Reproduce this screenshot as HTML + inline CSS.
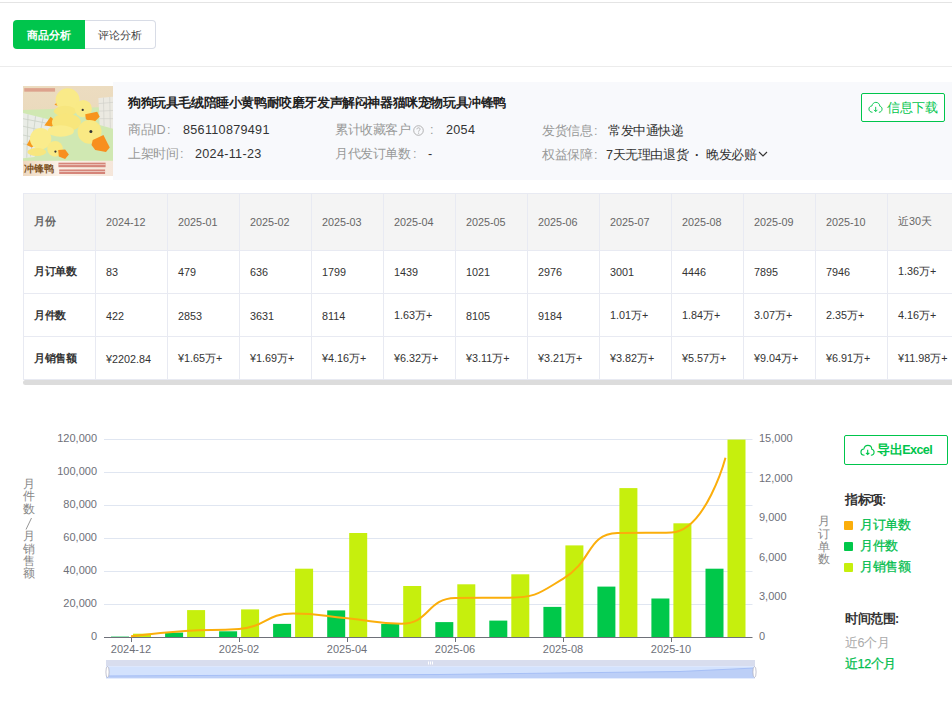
<!DOCTYPE html>
<html><head><meta charset="utf-8">
<style>
*{margin:0;padding:0;box-sizing:border-box}
html,body{width:952px;height:716px;overflow:hidden;background:#fff}
body{position:relative;font-family:"Liberation Sans",sans-serif;color:#333}
.a{position:absolute;white-space:nowrap;line-height:1}
.hl{position:absolute;left:0;width:952px;height:1px}
.tab1{position:absolute;left:13px;top:20px;width:72px;height:29px;background:#00c54c;border-radius:4px 0 0 4px;color:#fff;font-size:10.8px;font-weight:bold;text-align:center;line-height:30px;letter-spacing:-0.2px}
.tab2{position:absolute;left:85px;top:20px;width:71px;height:29px;border:1px solid #d8dce6;border-left:none;border-radius:0 4px 4px 0;color:#444;font-size:10.8px;font-weight:normal;text-align:center;line-height:28px;letter-spacing:-0.2px}
.panel{position:absolute;left:113px;top:82px;width:839px;height:98px;background:#f8f9fc}
.cj{letter-spacing:-0.4px}
.lbl{color:#999;font-size:12.6px}
.val{color:#333;font-size:12.6px}
.btn{position:absolute;border:1px solid #00c54c;background:#fff;border-radius:2px;color:#00c54c}
table{position:absolute;left:23px;top:193px;width:937px;border-collapse:collapse;table-layout:fixed}
td{width:72px;border:1px solid #e8eaf2;font-size:10.8px;color:#333;padding:0 0 0 10px;white-space:nowrap;overflow:hidden}
tr.h td{background:#f4f4f4;height:57px;color:#666}
tr.r td{height:43px}
tr.d td{padding-top:1px}
td.k{font-weight:bold;color:#333;letter-spacing:-0.3px}
.g{fill:#00c84a}
.l{fill:#c6ef0d}
.ax{font-size:11px;fill:#6e7079;font-family:"Liberation Sans",sans-serif}
.vt{position:absolute;font-size:12px;color:#888;line-height:12.3px;width:14px;text-align:center;white-space:normal}
.sq{position:absolute;left:844px;width:9px;height:9px;border-radius:1px}
.lg{position:absolute;left:860px;font-size:12.6px;color:#00bd4c;-webkit-text-stroke:0.25px #00bd4c}
</style></head><body>
<div class="hl" style="top:2px;background:#e4e4e4"></div>
<div class="tab1">商品分析</div>
<div class="tab2">评论分析</div>
<div class="hl" style="top:66px;background:#ececec"></div>

<div class="panel"></div>
<div id="img" style="position:absolute;left:23px;top:86px;width:90px;height:90px;overflow:hidden">
<svg width="90" height="90" viewBox="0 0 716 716">
<defs>
<linearGradient id="bgt" x1="0" y1="0" x2="0" y2="1"><stop offset="0" stop-color="#ecdcc0"/><stop offset="1" stop-color="#e6d5b6"/></linearGradient>
<linearGradient id="bot" x1="0" y1="0" x2="1" y2="0"><stop offset="0" stop-color="#eed8bf"/><stop offset="0.4" stop-color="#fbf2e8"/><stop offset="1" stop-color="#f5e6da"/></linearGradient>
</defs>
<rect width="716" height="716" fill="url(#bgt)"/>
<path d="M0,190 L716,165 L716,600 L0,600Z" fill="#d0e8b2"/>
<path d="M0,215 L200,265 L225,330 L90,565 L0,575Z" fill="#e9ece6"/>
<g stroke="#c9cfc4" stroke-width="6" fill="none"><path d="M0,260 L210,300 M0,320 L180,360 M0,390 L140,420 M0,460 L110,480 M40,225 L30,570 M100,240 L60,560 M160,255 L110,500"/></g>
<path d="M600,95 L716,85 L716,340 L610,310Z" fill="#ebe9e1"/>
<g stroke="#cfcfc8" stroke-width="5" fill="none"><path d="M600,140 L716,130 M605,200 L716,195 M608,260 L716,260 M640,92 L645,320 M690,88 L695,335"/></g>
<rect x="10" y="17" width="245" height="28" fill="#d88f7c" opacity="0.75"/>
<path d="M250,150 L290,112 L305,168Z" fill="#f79a1e"/>
<ellipse cx="355" cy="110" rx="95" ry="92" fill="#f9ea88"/>
<ellipse cx="335" cy="200" rx="90" ry="42" fill="#f7e67e"/>
<circle cx="480" cy="180" r="68" fill="#f9ea86"/>
<path d="M495,225 L590,205 L610,245 L560,295 L500,265Z" fill="#f7941d"/>
<path d="M170,315 L220,245 L270,290 L230,322Z" fill="#f79a1e"/>
<ellipse cx="345" cy="290" rx="115" ry="72" fill="#f8e67c"/>
<ellipse cx="300" cy="358" rx="105" ry="45" fill="#faec8c"/>
<circle cx="530" cy="365" r="95" fill="#f9e984"/>
<path d="M555,430 L640,390 L690,490 L660,525 L575,510 L545,470Z" fill="#f88f1f"/>
<circle cx="540" cy="362" r="12" fill="#333"/>
<circle cx="475" cy="190" r="9" fill="#333"/>
<path d="M30,470 L60,415 L95,470 L70,490Z" fill="#f79a1e"/>
<ellipse cx="140" cy="420" rx="85" ry="85" fill="#faec8c"/>
<ellipse cx="110" cy="525" rx="75" ry="32" fill="#f8e67e"/>
<circle cx="255" cy="500" r="62" fill="#f9ea86"/>
<path d="M280,510 L335,505 L365,545 L335,580 L285,560Z" fill="#f88f1f"/>
<circle cx="258" cy="522" r="9" fill="#333"/>
<rect x="0" y="595" width="716" height="121" fill="url(#bot)"/>
<text x="4" y="682" font-size="76" font-weight="bold" fill="#7c5224">冲锋鸭</text>
<g fill="#c75a4e" opacity="0.7"><rect x="282" y="610" width="375" height="36"/><rect x="288" y="664" width="365" height="36"/></g>
<g fill="#f8ece2"><rect x="282" y="624" width="375" height="5"/><rect x="288" y="678" width="365" height="5"/></g>
</svg></div>

<div class="a cj" style="left:128px;top:97px;font-size:12.6px;font-weight:bold;color:#222">狗狗玩具毛绒陪睡小黄鸭耐咬磨牙发声解闷神器猫咪宠物玩具冲锋鸭</div>
<div class="a lbl cj" style="left:128px;top:124px">商品</div><div class="a lbl" style="left:153px;top:124px">ID</div><div class="a lbl" style="left:167px;top:124px">:</div>
<div class="a val" style="left:183px;top:124px;letter-spacing:0.3px">856110879491</div>
<div class="a lbl cj" style="left:128px;top:148px">上架时间</div><div class="a lbl" style="left:180px;top:148px">:</div>
<div class="a val" style="left:195px;top:148px;letter-spacing:0.3px">2024-11-23</div>
<div class="a lbl cj" style="left:335px;top:124px">累计收藏客户</div>
<svg class="a" style="left:413px;top:125px" width="11" height="11" viewBox="0 0 11 11"><circle cx="5.5" cy="5.5" r="4.8" fill="none" stroke="#aaa" stroke-width="0.9"/><path d="M3.9,4.3 C3.9,3.3 4.6,2.8 5.5,2.8 C6.4,2.8 7.1,3.3 7.1,4.2 C7.1,5.2 5.6,5.3 5.6,6.6" fill="none" stroke="#aaa" stroke-width="0.9"/><circle cx="5.6" cy="8.1" r="0.6" fill="#aaa"/></svg>
<div class="a lbl" style="left:430px;top:124px">:</div>
<div class="a val" style="left:446px;top:124px;letter-spacing:0.3px">2054</div>
<div class="a lbl cj" style="left:335px;top:148px">月代发订单数</div><div class="a lbl" style="left:413px;top:148px">:</div>
<div class="a val" style="left:428px;top:148px">-</div>
<div class="a lbl cj" style="left:542px;top:125px">发货信息</div><div class="a lbl" style="left:594px;top:125px">:</div>
<div class="a val cj" style="left:608px;top:125px">常发中通快递</div>
<div class="a lbl cj" style="left:542px;top:149px">权益保障</div><div class="a lbl" style="left:594px;top:149px">:</div>
<div class="a val cj" style="left:606px;top:149px">7天无理由退货</div>
<div class="a val" style="left:695px;top:149px;font-weight:bold">·</div>
<div class="a val cj" style="left:706px;top:149px">晚发必赔</div>
<svg class="a" style="left:758px;top:151px" width="10" height="7" viewBox="0 0 10 7"><path d="M1,1 L5,5 L9,1" fill="none" stroke="#333" stroke-width="1.1"/></svg>

<div class="btn" style="left:861px;top:93px;width:84px;height:29px"></div>
<svg class="a" style="left:868px;top:101px" width="15" height="13" viewBox="0 0 16 13"><path d="M4.8,11.6 C2.4,11.6 1,10 1,8.1 C1,6.3 2.3,5 4.1,4.9 C4.6,2.5 6.3,1 8.4,1 C10.8,1 12.5,2.8 12.6,5.1 C14.1,5.4 15,6.6 15,8.2 C15,10.1 13.6,11.6 11.6,11.6" fill="none" stroke="#00c54c" stroke-width="1"/><path d="M8.2,5.8 V10.8 M6.4,9 L8.2,10.8 L10,9" fill="none" stroke="#00c54c" stroke-width="1"/></svg>
<div class="a cj" style="left:887px;top:102px;font-size:12.6px;color:#00c54c">信息下载</div>

<table>
<tr class="h"><td class="k">月份</td><td>2024-12</td><td>2025-01</td><td>2025-02</td><td>2025-03</td><td>2025-04</td><td>2025-05</td><td>2025-06</td><td>2025-07</td><td>2025-08</td><td>2025-09</td><td>2025-10</td><td>近30天</td></tr>
<tr class="r"><td class="k">月订单数</td><td>83</td><td>479</td><td>636</td><td>1799</td><td>1439</td><td>1021</td><td>2976</td><td>3001</td><td>4446</td><td>7895</td><td>7946</td><td>1.36万+</td></tr>
<tr class="r d"><td class="k">月件数</td><td>422</td><td>2853</td><td>3631</td><td>8114</td><td>1.63万+</td><td>8105</td><td>9184</td><td>1.01万+</td><td>1.84万+</td><td>3.07万+</td><td>2.35万+</td><td>4.16万+</td></tr>
<tr class="r d"><td class="k">月销售额</td><td>¥2202.84</td><td>¥1.65万+</td><td>¥1.69万+</td><td>¥4.16万+</td><td>¥6.32万+</td><td>¥3.11万+</td><td>¥3.21万+</td><td>¥3.82万+</td><td>¥5.57万+</td><td>¥9.04万+</td><td>¥6.91万+</td><td>¥11.98万+</td></tr>
</table>
<div style="position:absolute;left:23px;top:380px;width:929px;height:5px;background:#dcdcdc;border-radius:3px 0 0 3px"></div>

<svg style="position:absolute;left:0;top:0" width="952" height="716">
<g stroke="#e0e6f1" stroke-width="1">
<line x1="104" y1="439.5" x2="752.5" y2="439.5"/>
<line x1="104" y1="472.5" x2="752.5" y2="472.5"/>
<line x1="104" y1="505.5" x2="752.5" y2="505.5"/>
<line x1="104" y1="538.5" x2="752.5" y2="538.5"/>
<line x1="104" y1="571.5" x2="752.5" y2="571.5"/>
<line x1="104" y1="604.5" x2="752.5" y2="604.5"/>
</g>
<rect class="g" x="111.0" y="636.6" width="18" height="0.7"/>
<rect class="l" x="133.0" y="633.7" width="18" height="3.6"/>
<rect class="g" x="165.1" y="632.6" width="18" height="4.7"/>
<rect class="l" x="187.1" y="610.1" width="18" height="27.2"/>
<rect class="g" x="219.1" y="631.3" width="18" height="6.0"/>
<rect class="l" x="241.1" y="609.4" width="18" height="27.9"/>
<rect class="g" x="273.1" y="623.9" width="18" height="13.4"/>
<rect class="l" x="295.1" y="568.7" width="18" height="68.6"/>
<rect class="g" x="327.2" y="610.4" width="18" height="26.9"/>
<rect class="l" x="349.2" y="533.0" width="18" height="104.3"/>
<rect class="g" x="381.2" y="623.9" width="18" height="13.4"/>
<rect class="l" x="403.2" y="586.0" width="18" height="51.3"/>
<rect class="g" x="435.3" y="622.1" width="18" height="15.2"/>
<rect class="l" x="457.3" y="584.3" width="18" height="53.0"/>
<rect class="g" x="489.3" y="620.6" width="18" height="16.7"/>
<rect class="l" x="511.3" y="574.3" width="18" height="63.0"/>
<rect class="g" x="543.4" y="606.9" width="18" height="30.4"/>
<rect class="l" x="565.4" y="545.4" width="18" height="91.9"/>
<rect class="g" x="597.4" y="586.6" width="18" height="50.7"/>
<rect class="l" x="619.4" y="488.1" width="18" height="149.2"/>
<rect class="g" x="651.4" y="598.5" width="18" height="38.8"/>
<rect class="l" x="673.4" y="523.3" width="18" height="114.0"/>
<rect class="g" x="705.5" y="568.7" width="18" height="68.6"/>
<rect class="l" x="727.5" y="439.6" width="18" height="197.7"/>
<line x1="104" y1="637.5" x2="752.5" y2="637.5" stroke="#6e7079" stroke-width="1"/>
<g stroke="#6e7079"><line x1="131.5" y1="637" x2="131.5" y2="642"/><line x1="239.5" y1="637" x2="239.5" y2="642"/><line x1="347.5" y1="637" x2="347.5" y2="642"/><line x1="455.5" y1="637" x2="455.5" y2="642"/><line x1="563.5" y1="637" x2="563.5" y2="642"/><line x1="671.5" y1="637" x2="671.5" y2="642"/></g>
<path d="M131.02,636.20 C131.02,636.20 157.99,632.81 185.06,630.98 C212.03,629.16 212.60,630.98 239.10,628.90 C266.64,626.75 265.65,613.55 293.15,613.55 C319.69,613.55 320.18,615.74 347.19,618.31 C374.23,620.87 375.52,623.82 401.23,623.82 C429.57,623.82 426.86,598.38 455.27,598.02 C480.91,597.69 483.08,598.02 509.31,597.69 C537.13,597.34 539.15,593.08 563.35,578.61 C593.19,560.78 586.77,533.97 617.40,533.09 C640.82,532.41 651.46,533.09 671.44,532.41 C705.50,531.27 725.48,457.78 725.48,457.78" fill="none" stroke="#fbae0b" stroke-width="2"/>
<g class="ax" text-anchor="end">
<text x="97" y="442">120,000</text><text x="97" y="475">100,000</text><text x="97" y="508">80,000</text><text x="97" y="541">60,000</text><text x="97" y="574">40,000</text><text x="97" y="607">20,000</text><text x="97" y="640">0</text>
</g>
<g class="ax">
<text x="759" y="442">15,000</text><text x="759" y="481.6">12,000</text><text x="759" y="521.2">9,000</text><text x="759" y="560.8">6,000</text><text x="759" y="600.4">3,000</text><text x="759" y="640">0</text>
</g>
<g class="ax" text-anchor="middle">
<text x="131" y="653">2024-12</text><text x="239" y="653">2025-02</text><text x="347" y="653">2025-04</text><text x="455" y="653">2025-06</text><text x="563" y="653">2025-08</text><text x="671" y="653">2025-10</text>
</g>
<rect x="106" y="660" width="649" height="6.3" fill="#d8ddee"/>
<rect x="106" y="666.3" width="649" height="12" fill="#d3e2fd"/>
<path d="M106,676 L200,675.5 L320,675 L440,674.5 L560,673 L680,671.5 L755,668 L755,678.3 L106,678.3Z" fill="#bccff7"/>
<path d="M106,676 L200,675.5 L320,675 L440,674.5 L560,673 L680,671.5 L755,668" fill="none" stroke="#a6bff6" stroke-width="1"/>
<ellipse cx="107.5" cy="672" rx="1.6" ry="5.5" fill="#fff" stroke="#aab" stroke-width="0.7"/>
<ellipse cx="754.5" cy="672" rx="1.6" ry="5.5" fill="#fff" stroke="#aab" stroke-width="0.7"/>
<g fill="#fff"><rect x="428" y="661.5" width="1" height="3"/><rect x="430" y="661.5" width="1" height="3"/><rect x="432" y="661.5" width="1" height="3"/></g>
</svg>
<div class="vt" style="left:22px;top:478px;line-height:12.45px">月<br>件<br>数<br><span style="display:inline-block;height:12.3px"></span><br>月<br>销<br>售<br>额</div>
<svg class="a" style="left:22px;top:517px" width="14" height="14"><line x1="9.5" y1="1" x2="4" y2="12.5" stroke="#8a8a8a" stroke-width="0.9"/></svg>
<div class="vt" style="left:817px;top:515px;line-height:12.8px">月<br>订<br>单<br>数</div>

<div class="btn" style="left:844px;top:435px;width:104px;height:30px"></div>
<svg class="a" style="left:860px;top:444px" width="15" height="13" viewBox="0 0 16 13"><path d="M4.8,11.6 C2.4,11.6 1,10 1,8.1 C1,6.3 2.3,5 4.1,4.9 C4.6,2.5 6.3,1 8.4,1 C10.8,1 12.5,2.8 12.6,5.1 C14.1,5.4 15,6.6 15,8.2 C15,10.1 13.6,11.6 11.6,11.6" fill="none" stroke="#00c54c" stroke-width="1.2"/><path d="M8.2,5.8 V10.8 M6.4,9 L8.2,10.8 L10,9" fill="none" stroke="#00c54c" stroke-width="1.2"/></svg>
<div class="a cj" style="left:877px;top:444px;font-size:12.6px;font-weight:bold;color:#00c54c">导出<span style="letter-spacing:-0.6px">Excel</span></div>

<div class="a cj" style="left:845px;top:494px;font-size:12.6px;font-weight:bold;color:#333">指标项</div><div class="a" style="left:882px;top:494px;font-size:12.6px;font-weight:bold;color:#333">:</div>
<div class="sq" style="top:521px;background:#fbae0b"></div><div class="a lg cj" style="top:519px">月订单数</div>
<div class="sq" style="top:542px;background:#00c84a"></div><div class="a lg cj" style="top:540px">月件数</div>
<div class="sq" style="top:563px;background:#c6ef0d"></div><div class="a lg cj" style="top:561px">月销售额</div>
<div class="a cj" style="left:845px;top:613px;font-size:12.6px;font-weight:bold;color:#333">时间范围</div><div class="a" style="left:895px;top:613px;font-size:12.6px;font-weight:bold;color:#333">:</div>
<div class="a cj" style="left:845px;top:637px;font-size:12.6px;color:#aaa">近6个月</div>
<div class="a cj" style="left:845px;top:658px;font-size:12.6px;color:#00bd4c;-webkit-text-stroke:0.25px #00bd4c">近12个月</div>
</body></html>
